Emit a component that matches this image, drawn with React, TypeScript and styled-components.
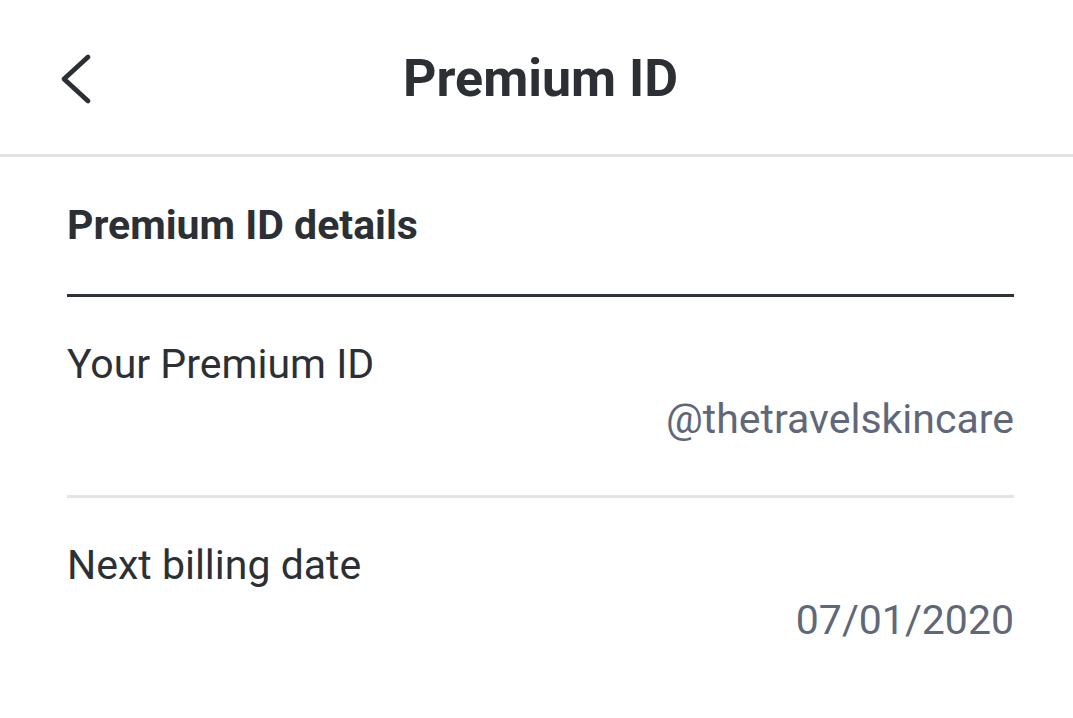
import React from "react";
import styled, { createGlobalStyle } from "styled-components";

const Global = createGlobalStyle`
  html, body { margin: 0; padding: 0; background: #ffffff; }
  body { font-family: Roboto, "Noto Sans", Arial, sans-serif; }
`;

const Page = styled.div`
  width: 1073px;
  height: 718px;
  background: #fff;
  display: flex;
  flex-direction: column;
  overflow: hidden;
`;

const Header = styled.header`
  height: 154px;
  border-bottom: 3px solid #e2e3e6;
  display: grid;
  grid-template-columns: 130px 1fr 130px;
  align-items: center;
  flex-shrink: 0;
`;

const BackButton = styled.button`
  background: none;
  border: 0;
  padding: 4px 0 0 58px;
  height: 60px;
  display: flex;
  align-items: center;
  color: #2b2f33;
  cursor: pointer;
`;

const Title = styled.h1`
  margin: 0;
  text-align: center;
  font-size: 52px;
  font-weight: 700;
  color: #2c3035;
  padding: 2px 0 0 8px;
`;

const Content = styled.main`
  padding: 0 59px 0 67px;
  display: flex;
  flex-direction: column;
`;

const SectionTitle = styled.h2`
  margin: 0;
  height: 140px;
  box-sizing: border-box;
  padding-top: 44px;
  font-size: 41px;
  line-height: 48px;
  font-weight: 700;
  color: #2c3035;
  border-bottom: 3px solid #2e3236;
`;

const Row = styled.div<{ $last?: boolean }>`
  height: ${(p) => (p.$last ? "auto" : "201px")};
  box-sizing: border-box;
  padding-top: 43px;
  border-bottom: ${(p) => (p.$last ? "none" : "3px solid #e3e4e6")};
  display: flex;
  flex-direction: column;
`;

const Label = styled.div`
  font-size: 41px;
  line-height: 48px;
  color: #2c3035;
`;

const Value = styled.div`
  font-size: 41px;
  line-height: 48px;
  color: #5f6878;
  text-align: right;
  margin-top: 7px;
`;

export default function App() {
  return (
    <>
      <Global />
      <Page>
        <Header>
          <BackButton aria-label="Back">
            <svg width="36" height="52" viewBox="0 0 36 52" fill="none">
              <path
                d="M30 4 L6 26 L30 48"
                stroke="currentColor"
                strokeWidth="4.8"
                strokeLinecap="round"
                strokeLinejoin="round"
              />
            </svg>
          </BackButton>
          <Title>Premium ID</Title>
          <div />
        </Header>
        <Content>
          <SectionTitle>Premium ID details</SectionTitle>
          <Row>
            <Label>Your Premium ID</Label>
            <Value>@thetravelskincare</Value>
          </Row>
          <Row $last>
            <Label>Next billing date</Label>
            <Value>07/01/2020</Value>
          </Row>
        </Content>
      </Page>
    </>
  );
}
